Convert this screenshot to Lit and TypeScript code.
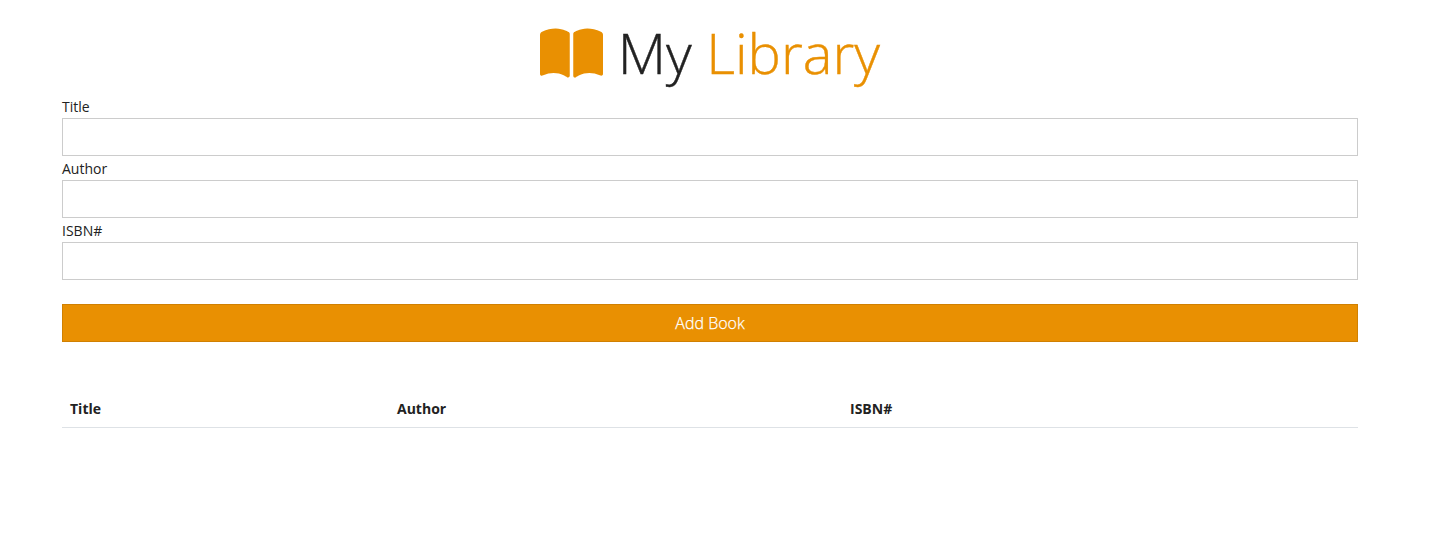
import { LitElement, html, css, svg } from "lit";
import { customElement } from "lit/decorators.js";

@customElement("app-root")
export class AppRoot extends LitElement {
  static styles = css`
    :host { display: block; box-sizing: border-box; min-height: 558px; padding: 19px 85px 0 62px; background: #fff; color: #222; font-family: "Open Sans", sans-serif; font-size: 14px; line-height: 24px; }
    *, *::before { box-sizing: border-box; }
    h1 { margin: 0; height: 76px; text-align: center; font-weight: 300; font-size: 56px; line-height: 67px; -webkit-text-stroke: 0.4px currentColor; }
    .book { width: 63px; height: 56px; vertical-align: -7px; fill: #e99002; }
    .accent { color: #e99002; -webkit-text-stroke-color: #e99002; }
    form { display: flex; flex-direction: column; }
    label { height: 23px; line-height: 23px; }
    .field { display: block; width: 100%; height: 38px; margin: 0 0 1px; border: 1px solid #ccc; border-radius: 0; padding: 6px 12px; font: inherit; outline: none; background: #fff; }
    .submit { height: 38px; margin: 23px 0 0; border: 1px solid #d08002; border-radius: 0; background: #e99002; color: #fff; font: 300 16px/24px "Open Sans", sans-serif; padding: 6px; -webkit-text-stroke: 0.25px #fff; }
    table { width: 100%; margin-top: 48px; border-collapse: collapse; table-layout: fixed; }
    th { height: 37.5px; padding: 0 8px; text-align: left; font-weight: 700; line-height: 21px; border-bottom: 1px solid #dee2e6; }
    .c1 { width: 327px; } .c2 { width: 453px; }
  `;

  render() {
    return html`
      <h1>${svg`<svg class="book" viewBox="0 0 576 512"><path d="M144.3 32.04C106.9 31.29 63.7 41.44 18.6 61.29c-11.42 5.026-18.6 16.67-18.6 29.15l0 357.6c0 11.55 11.99 19.55 22.45 14.65c126.3-59.14 219.8 11 223.8 14.01C249.1 478.9 252.5 480 256 480c12.4 0 16-11.38 16-15.98V80.04c0-5.203-2.531-10.08-6.781-13.08C263.3 65.58 216.7 33.35 144.3 32.04zM557.4 61.29c-45.11-19.79-88.48-29.61-125.7-29.26c-72.44 1.312-118.1 33.55-120.9 34.92C306.5 69.96 304 74.83 304 80.04v383.1C304 468.4 307.5 480 320 480c3.484 0 6.938-1.125 9.781-3.328c3.925-3.018 97.44-73.16 223.8-14c10.46 4.896 22.45-3.105 22.45-14.65l0-357.6C576 77.97 568.8 66.31 557.4 61.29z"/></svg>`} My <span class="accent">Library</span></h1>
      <form @submit=${(e: Event) => e.preventDefault()}>
        <label for="title">Title</label><input class="field" id="title" />
        <label for="author">Author</label><input class="field" id="author" />
        <label for="isbn">ISBN#</label><input class="field" id="isbn" />
        <button class="submit">Add Book</button>
      </form>
      <table><thead><tr><th class="c1">Title</th><th class="c2">Author</th><th>ISBN#</th></tr></thead></table>
    `;
  }
}
